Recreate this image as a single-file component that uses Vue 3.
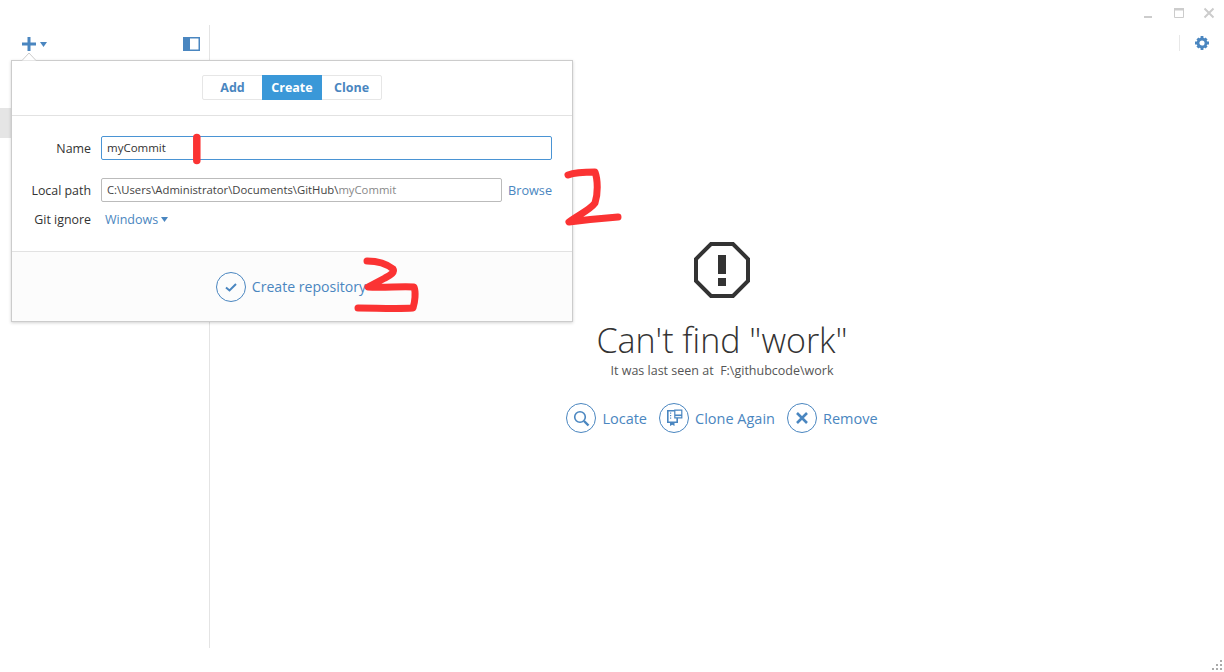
<script setup>
const actions = [
  { label: 'Locate', icon: 'search' },
  { label: 'Clone Again', icon: 'clone' },
  { label: 'Remove', icon: 'remove' },
]
const tabs = ['Add', 'Create', 'Clone']
</script>

<template>
  <div class="window">
    <div class="titlebar">
      <svg class="win-btn" width="14" height="14" viewBox="0 0 14 14"><rect x="2" y="10" width="8" height="2" fill="#ccc" /></svg>
      <svg class="win-btn" width="14" height="14" viewBox="0 0 14 14"><path d="M2.500 2.500h9v9h-9z" fill="none" stroke="#ccc" /><rect x="2" y="2" width="10" height="2.500" fill="#ccc" /></svg>
      <svg class="win-btn" width="14" height="14" viewBox="0 0 14 14"><path d="M2.500 2.500l9 9M11.500 2.500l-9 9" stroke="#ccc" stroke-width="2" /></svg>
    </div>

    <div class="body">
      <aside class="sidebar">
        <div class="side-top">
          <div class="add-btn">
            <svg width="14" height="14" viewBox="0 0 14 14"><path d="M0 5.500h14v3H0zM5.500 0h3v14h-3z" fill="#4a86c0" /></svg>
            <svg width="7" height="5" viewBox="0 0 7 5"><path d="M0 0h7L3.500 5z" fill="#4a86c0" /></svg>
          </div>
          <svg width="17" height="14" viewBox="0 0 17 14"><rect width="17" height="14" fill="#4a86c0" /><rect x="7" y="1.500" width="8.500" height="11" fill="#fff" /></svg>
        </div>
        <div class="side-row"></div>
      </aside>

      <main class="main">
        <div class="settings">
          <span class="settings-sep"></span>
          <svg width="14" height="14" viewBox="0 0 14 14">
            <circle cx="7" cy="7" r="4" fill="none" stroke="#4a86c0" stroke-width="2.800" />
            <path d="M5.600 0h2.800v2.500H5.600zM5.600 11.500h2.800V14H5.600zM0 5.600h2.500v2.800H0zM11.500 5.600H14v2.800h-2.500z" fill="#4a86c0" />
            <path d="M1.400 3.400l2-2 1.400 1.400-2 2zM9.200 11.200l2-2 1.400 1.400-2 2zM10.600 1.400l2 2-1.400 1.400-2-2zM2.800 9.200l2 2-1.400 1.400-2-2z" fill="#4a86c0" />
          </svg>
        </div>

        <svg class="alert" width="56" height="56" viewBox="0 0 56 56">
          <path d="M17 2h22l15 15v22L39 54H17L2 39V17z" fill="none" stroke="#333" stroke-width="4" />
          <rect x="24" y="13" width="8" height="19" fill="#333" />
          <rect x="24" y="36" width="8" height="8" fill="#333" />
        </svg>
        <h1 class="heading">Can't find "work"</h1>
        <p class="subline">It was last seen at&nbsp; F:\githubcode\work</p>

        <div class="actions">
          <a v-for="a in actions" :key="a.label" class="action">
            <span class="circle">
              <svg v-if="a.icon === 'search'" width="18" height="18" viewBox="0 0 18 18">
                <circle cx="8" cy="8" r="5.300" fill="none" stroke="#4a86c0" stroke-width="1.600" />
                <path d="M12 12l4.500 4.500" stroke="#4a86c0" stroke-width="2.400" />
              </svg>
              <svg v-else-if="a.icon === 'clone'" width="18" height="18" viewBox="0 0 18 18">
                <path d="M2.800 1.800h9.400v11.400H2.800z" fill="none" stroke="#4a86c0" stroke-width="1.600" />
                <rect x="5" y="3.500" width="1.200" height="1.200" fill="#4a86c0" />
                <rect x="5" y="6" width="1.200" height="1.200" fill="#4a86c0" />
                <rect x="5" y="8.500" width="1.200" height="1.200" fill="#4a86c0" />
                <path d="M5 13.500h4.500V17l-2.200-1.200L5 17z" fill="#4a86c0" />
                <path d="M9.800 1.200h7v7.600h-7z" fill="#fff" stroke="#4a86c0" stroke-width="1.200" />
                <rect x="10" y="5.500" width="7" height="1.600" fill="#4a86c0" />
              </svg>
              <svg v-else width="14" height="14" viewBox="0 0 14 14">
                <path d="M2 2l10 10M12 2L2 12" stroke="#4a86c0" stroke-width="2.600" />
              </svg>
            </span>
            {{ a.label }}
          </a>
        </div>
      </main>
    </div>

    <div class="grip">
      <i v-for="n in 6" :key="n"></i>
    </div>

    <section class="popover">
      <svg class="caret" width="24" height="9" viewBox="0 0 24 9"><path d="M5 8.500L12 1l7 7.500" fill="#fff" stroke="#ccc" /></svg>
      <header class="pop-head">
        <div class="tabs">
          <span v-for="t in tabs" :key="t" :class="['tab', { active: t === 'Create' }]">{{ t }}</span>
        </div>
      </header>
      <div class="form">
        <div class="row row-name">
          <label>Name</label>
          <div class="input focused">myCommit</div>
        </div>
        <div class="row row-path">
          <label>Local path</label>
          <div class="input">C:\Users\Administrator\Documents\GitHub\<span class="dim">myCommit</span></div>
          <a class="browse">Browse</a>
        </div>
        <div class="row row-ignore">
          <label>Git ignore</label>
          <a class="select">Windows
            <svg width="7" height="5" viewBox="0 0 7 5"><path d="M0 0h7L3.500 5z" fill="#4a86c0" /></svg>
          </a>
        </div>
      </div>
      <footer class="pop-foot">
        <span class="circle">
          <svg width="14" height="14" viewBox="0 0 14 14"><path d="M2 7.500l3.500 3L12 4" fill="none" stroke="#4a86c0" stroke-width="2" /></svg>
        </span>
        Create repository
      </footer>
    </section>

    <!-- hand drawn marks on top of the screenshot -->
    <svg class="marks" width="1224" height="672" viewBox="0 0 1224 672" fill="none" stroke="#fb3333" stroke-linecap="round" stroke-linejoin="round">
      <path d="M196.800 137.500v23" stroke-width="7.500" />
      <path d="M568 175c8-3 18-3 27-3 3 8 3 22 0 31-5 7-17 12-26 19 16-2 36-4 49-5" stroke-width="7" />
      <path d="M367 261c10 0 20 3 26 8 2 3-2 6-8 9l-17 9c16 1 34-1 46 0 2 5 1 15-1 21-15 1-38 0-55 0" stroke-width="7" />
    </svg>
  </div>
</template>

<style scoped>
.window {
  position: relative;
  width: 1224px;
  height: 672px;
  overflow: hidden;
  background: #fff;
  font-family: "Open Sans", "Noto Sans", sans-serif;
  color: #333;
}

.titlebar {
  display: flex;
  justify-content: flex-end;
  gap: 16px;
  height: 25px;
  padding: 6px 8px 0 0;
  box-sizing: border-box;
}

.win-btn {
  display: block;
}

.body {
  display: flex;
  height: 623px;
}

.sidebar {
  width: 209px;
  flex: none;
  border-right: 1px solid #e4e4e4;
}

.side-top {
  display: flex;
  align-items: center;
  justify-content: space-between;
  height: 38px;
  padding: 0 9px 0 22px;
}

.add-btn {
  display: flex;
  align-items: center;
  gap: 4px;
}

.side-row {
  height: 30px;
  margin-top: 45px;
  background: #e5e5e5;
}

.main {
  position: relative;
  flex: 1;
  display: flex;
  flex-direction: column;
  align-items: center;
  padding: 217px 0 0 10px;
}

.settings {
  position: absolute;
  top: 10px;
  right: 15px;
  display: flex;
  align-items: center;
  gap: 15px;
}

.settings-sep {
  width: 1px;
  height: 16px;
  background: #e8e8e8;
}

.alert {
  display: block;
}

.heading {
  margin: 22px 0 0;
  font-size: 34px;
  font-weight: 300;
  line-height: 40px;
  color: #333;
}

.subline {
  margin: 3px 0 0;
  font-size: 12.500px;
  line-height: 16px;
  color: #555;
}

.actions {
  display: flex;
  gap: 12px;
  margin-top: 24px;
}

.action {
  display: flex;
  align-items: center;
  gap: 6px;
  font-size: 14.500px;
  color: #4a86c0;
}

.circle {
  display: flex;
  align-items: center;
  justify-content: center;
  width: 28px;
  height: 28px;
  border: 1px solid #4a86c0;
  border-radius: 50%;
}

.popover {
  position: absolute;
  left: 11px;
  top: 60px;
  width: 562px;
  height: 262px;
  box-sizing: border-box;
  display: flex;
  flex-direction: column;
  background: #fff;
  border: 1px solid #ccc;
  box-shadow: 0 1px 3px rgba(0, 0, 0, 0.18);
}

.caret {
  position: absolute;
  left: 5px;
  top: -9px;
}

.pop-head {
  display: flex;
  justify-content: center;
  align-items: center;
  height: 55px;
  padding-bottom: 1px;
  box-sizing: border-box;
  flex: none;
  border-bottom: 1px solid #e2e2e2;
}

.tabs {
  display: flex;
  height: 23px;
  border: 1px solid #e6e6e6;
  border-radius: 2px;
}

.tab {
  display: flex;
  align-items: center;
  justify-content: center;
  width: 59px;
  font-size: 12.500px;
  font-weight: 700;
  color: #4a86c0;
}

.tab.active {
  width: 60px;
  margin: -1px 0;
  background: #3a98d8;
  color: #fff;
}

.form {
  flex: 1;
  padding-top: 20px;
}

.row {
  display: flex;
  align-items: center;
  font-size: 12.400px;
}

.row label {
  width: 79px;
  flex: none;
  text-align: right;
  margin-right: 10px;
  color: #333;
}

.row-name {
  height: 24px;
}

.row-path {
  height: 24px;
  margin-top: 18px;
}

.row-ignore {
  height: 20px;
  margin-top: 7px;
}

.input {
  box-sizing: border-box;
  height: 24px;
  line-height: 22px;
  padding-left: 5px;
  font-size: 11.300px;
  border: 1px solid #bbb;
  border-radius: 2px;
  width: 401px;
  color: #444;
  white-space: nowrap;
}

.input.focused {
  width: 451px;
  border-color: #4a94d4;
  font-size: 11.500px;
  color: #333;
}

.dim {
  color: #888;
}

.browse {
  margin-left: 6px;
  font-size: 12.700px;
  color: #4a86c0;
}

.select {
  display: flex;
  align-items: center;
  gap: 3px;
  margin-left: 4px;
  font-size: 12.500px;
  color: #4a86c0;
}

.pop-foot {
  height: 70px;
  flex: none;
  box-sizing: border-box;
  display: flex;
  align-items: center;
  justify-content: center;
  gap: 6px;
  padding-right: 2px;
  background: #fcfcfc;
  border-top: 1px solid #e2e2e2;
  font-size: 14.100px;
  color: #4a86c0;
}

.grip {
  position: absolute;
  right: 2px;
  bottom: 2px;
  display: grid;
  grid-template-columns: repeat(3, 2px);
  grid-template-rows: repeat(3, 2px);
  gap: 2px;
}

.grip i {
  background: #aaa;
}

.grip i:nth-child(1) {
  grid-column: 3;
  grid-row: 1;
}

.grip i:nth-child(2) {
  grid-column: 2;
  grid-row: 2;
}

.grip i:nth-child(3) {
  grid-column: 3;
  grid-row: 2;
}

.grip i:nth-child(4) {
  grid-column: 1;
  grid-row: 3;
}

.grip i:nth-child(5) {
  grid-column: 2;
  grid-row: 3;
}

.grip i:nth-child(6) {
  grid-column: 3;
  grid-row: 3;
}

.marks {
  position: absolute;
  left: 0;
  top: 0;
  pointer-events: none;
}
</style>
